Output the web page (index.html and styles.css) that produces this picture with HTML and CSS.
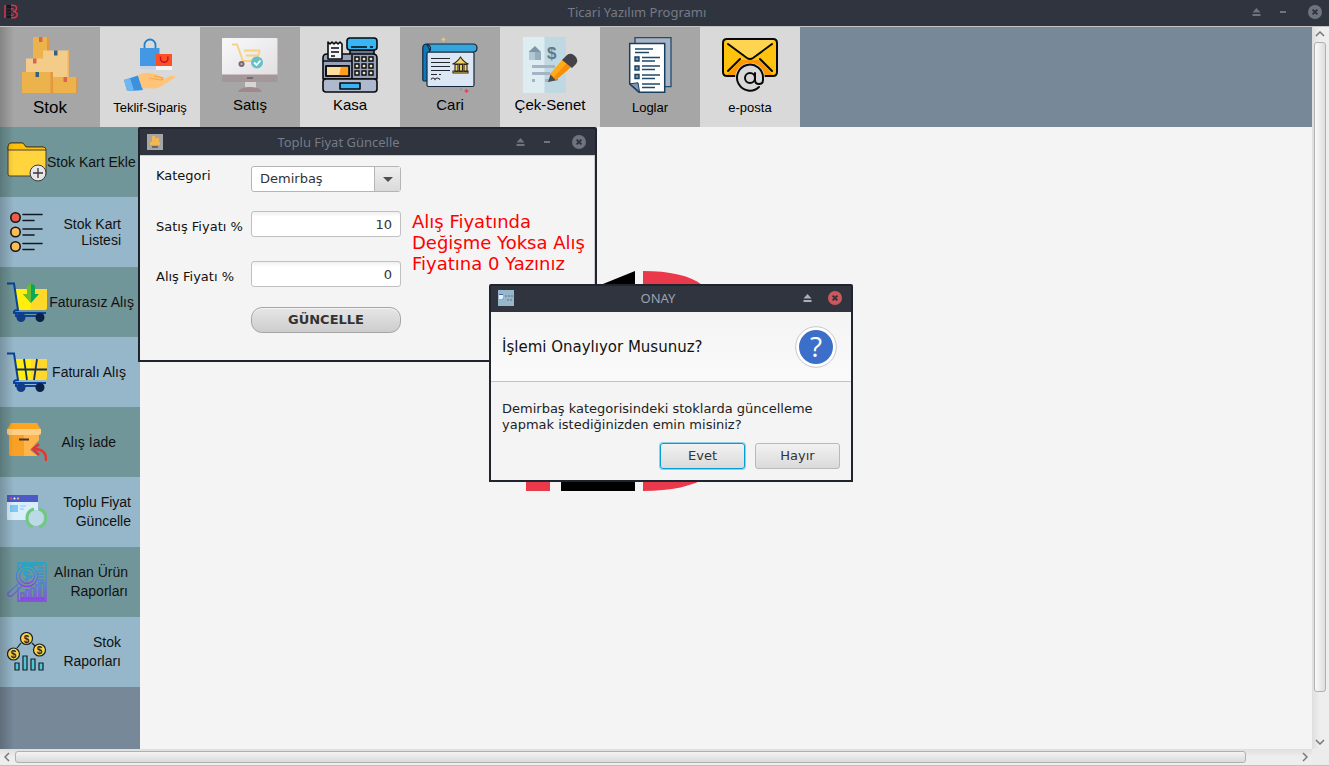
FILE: index.html
```html
<!DOCTYPE html>
<html lang="tr">
<head>
<meta charset="utf-8">
<title>Ticari Yazılım Programı</title>
<link rel="stylesheet" href="styles.css">
</head>
<body>
<svg class="defs" aria-hidden="true">
  <defs>
    <linearGradient id="screen" x1="0" y1="0" x2="1" y2="1"><stop offset="0" stop-color="#f8f8fa"/><stop offset="1" stop-color="#e2dfe1"/></linearGradient>
    <linearGradient id="violet" x1="0" y1="0" x2="0" y2="1"><stop offset="0" stop-color="#19a8cc"/><stop offset=".5" stop-color="#4f7fd6"/><stop offset="1" stop-color="#8a3fe8"/></linearGradient>
    <symbol id="close" viewBox="0 0 14 14"><circle cx="7" cy="7" r="7" fill="currentColor"/><path d="M4.600 4.600l4.800 4.800M9.400 4.600L4.600 9.400" stroke="#2f343f" stroke-width="2"/></symbol>
    <symbol id="eject" viewBox="0 0 8 8"><path d="M4 0l4 4.500H0zM0 6h8v2H0z" fill="currentColor"/></symbol>
  </defs>
</svg>

<div class="app">
  <header class="titlebar">
    <svg class="app-logo" viewBox="0 0 16 16"><path d="M1 1v13M7 1.500c7-1.500 7 5 2 6C15 8 15 15 7 13.500" fill="none" stroke="#d9364a" stroke-width="1.500"/><path d="M2.500 1H7v13H2.500z" fill="#14161c"/><path d="M3 5h4M3 8h4M3 11h4" stroke="#4b3440"/><path d="M7 4.500c3.500-.5 3.500 1.500 0 1.500M7 10c3.500-.5 3.500 2 0 1.500" fill="none" stroke="#d9364a"/></svg>
    <h1 class="title">Ticari Yazılım Programı</h1>
    <div class="controls">
      <button class="ctl" aria-label="Yukarı"><svg class="eject"><use href="#eject"/></svg></button>
      <button class="ctl" aria-label="Küçült"><span class="dash"></span></button>
      <button class="ctl" aria-label="Kapat"><svg class="close"><use href="#close"/></svg></button>
    </div>
  </header>

  <div class="viewport">
    <div class="content">
      <nav class="toolbar">
        <button class="tool dark">
          <svg class="tool-icon" viewBox="0 0 56 56"><path d="M11 0h14v22H11z" fill="#ecb34c"/><path d="M25 0h2.500v14H25z" fill="#e2983f"/><path d="M17 0h3.500v5H17z" fill="#dc6350"/><path d="M4 21.500h17V35H4z" fill="#f2cc88"/><path d="M21 13.500h26V40H21z" fill="#f2cc88"/><path d="M45.500 13.500H47V40h-1.500z" fill="#edb560"/><path d="M32 13.500h3.500v5H32z" fill="#35607f"/><path d="M11 21.500h3.500v5H11z" fill="#dc6350"/><path d="M0 35h29v21H0zM31 40h23v16H31z" fill="#ecb34c"/><path d="M28.500 35h2.500v21h-2.500zM54 40h2v16h-2z" fill="#e2983f"/><path d="M13.500 35H17v5h-3.500z" fill="#35607f"/><path d="M41.500 40H45v5h-3.500z" fill="#dc6350"/></svg>
          <span class="tool-label label-large">Stok</span>
        </button>
        <button class="tool light">
          <svg class="tool-icon" viewBox="0 0 56 56"><path d="M22.500 16V8a5.500 5.500 0 0 1 11 0v8" fill="none" stroke="#2381c9" stroke-width="1.800"/><path d="M18 11h19.500v18H18z" fill="#4398e4"/><path d="M18 29h16v3H18z" fill="#c5d3e5"/><path d="M34 28h16v4q0 1-1 1H35q-1 0-1-1z" fill="#f5f5f8"/><path d="M34 17h16v12H34z" fill="#ff5023"/><path d="M38.500 19.500v2a3.700 3.700 0 0 0 7.400 0v-2" fill="none" stroke="#c3102c" stroke-width="1.500"/><path d="M2 43l14-4.500 5 14.500q-8 1-16 .5z" fill="#3c91df"/><path d="M2 43l6-2 4 12.500H5z" fill="#71b7ef"/><path d="M16 38.500q5-3.500 12-2.500 8 1 12 4 2 2 0 3l9-4q5-1 4 1.500L40 49q-5 3-10 2.500l-10-.5z" fill="#ffc477"/><path d="M28 41l10 2q3 0 3-2l-9-2" fill="none" stroke="#f2a64c" stroke-width="1.200"/></svg>
          <span class="tool-label label-small">Teklif-Sipariş</span>
        </button>
        <button class="tool dark">
          <svg class="tool-icon" viewBox="0 0 56 56"><path d="M23 44h11v8H23z" fill="#d7d4d6"/><path d="M16 55q2-5 12-5t12 5z" fill="#a0888c"/><rect y="1" width="55.500" height="44" rx="1.500" fill="#a3979a"/><path d="M1 1h53.500q1 0 1 1v35.500H0V2q0-1 1-1z" fill="url(#screen)"/><path d="M25 40h6v2h-6z" fill="#756a6e"/><path d="M10 7.500h5L21 24h16M22 13.500h16M24 18.500h12.500M38 13.500l-3 9" fill="none" stroke="#f7d17e" stroke-width="1.800"/><circle cx="19.500" cy="27" r="3" fill="#7c6a70"/><circle cx="19.500" cy="27" r="1" fill="#cabfc4"/><circle cx="35" cy="25.500" r="6" fill="#68bfc7"/><path d="M32 25.500l2.500 2.500 4-4.500" fill="none" stroke="#fff" stroke-width="1.800"/></svg>
          <span class="tool-label label-medium">Satış</span>
        </button>
        <button class="tool light">
          <svg class="tool-icon" viewBox="0 0 56 56"><g stroke="#08090d" stroke-width="1.600" stroke-linejoin="round"><path d="M28 13h24v5H28z" fill="#68758c"/><path d="M1 42V21q0-4 4-4h46q4 0 4 4v21z" fill="#96a2b8"/><rect x="1" y="42" width="54" height="13" rx="3" fill="#aeb9ce"/><rect x="25" y="1" width="30" height="12" rx="3" fill="#38b5f3"/><path d="M6 22V5l2 2 2-2 2 2 2-2 2 2 2-2 2 2v15z" fill="#f3f4f8"/><path d="M4 29h23v10H4z" fill="#fddda0"/><path d="M19 29h8v10H17z" fill="#ff9f22" stroke="none"/><path d="M4 29h23v10H4z" fill="none"/><path d="M18 46h20v6H18z" fill="#36b5f2"/><path d="M1 24h29M30 18v24M9 11h8M9 15h8M9 19h4M29 10h16M48 10h3" fill="none"/></g><g fill="#f4e4bd" stroke="#08090d" stroke-width="1.400"><path d="M33 20h4v4h-4zM40 20h4v4h-4zM47 20h4v4h-4zM33 27h4v4h-4zM40 27h4v4h-4zM47 27h4v4h-4zM33 34h4v4h-4zM40 34h4v4h-4zM47 34h4v4h-4z"/></g></svg>
          <span class="tool-label label-medium">Kasa</span>
        </button>
        <button class="tool dark">
          <svg class="tool-icon" viewBox="0 0 56 56"><g stroke="#17273b" stroke-width="1.200"><path d="M.8 11q0-4 4-4l4 8v27q0 2-2 2H2q-1.200 0-1.200-2z" fill="#0c7abd"/><rect x="5" y="15" width="47" height="34.500" rx="1.500" fill="#dbe7f4"/><path d="M5 7h46q4 0 4 4t-4 4H7q4-5-2-8z" fill="#36a5da"/></g><path d="M9 21.500h19M9 25.500h19M9 29.500h19M9 33.500h19M9 37.500h6M17 37.500h2M9 42.500q2-3 4 0q2-3 5 0" fill="none" stroke="#24262e" stroke-width="1.200"/><path d="M30.500 27q5-2 8-7 3 5 8 7zM31 36h15v-2H31zM33 27.500h3v7h-3zM37.500 27.500h3v7h-3zM42 27.500h3v7h-3z" fill="#f3d466" stroke="#33271b" stroke-width="1.100"/><path d="M21.500.5v4M19.500 2.500h4" stroke="#f4ca55" stroke-width="1.300"/><path d="M44.500 52v4M42.500 54h4" stroke="#e4425e" stroke-width="1.300"/><path d="M28 .5v2" stroke="#8fbf70"/><path d="M39 51.500v2" stroke="#628da5"/></svg>
          <span class="tool-label label-medium">Cari</span>
        </button>
        <button class="tool light">
          <svg class="tool-icon" viewBox="0 0 56 56"><path d="M1 0h22v56H1z" fill="#deedf2"/><path d="M22.500 0H44v56H22.500z" fill="#bfd8e2"/><path d="M6.500 15L13 9l6 6z" fill="#8194a3"/><path d="M7 15h6v8H7z" fill="#b2c9d5"/><path d="M13 15h6v8h-6z" fill="#95aebe"/><text x="25" y="22" class="icon-dollar">$</text><path d="M10 28h23v3H10zM10 35h18v3H10zM10 42h3v3h-3zM23 42h5v3h-5z" fill="#a4b3c5"/><path d="M26 45l3-9 7 7z" fill="#4b4b50"/><path d="M28 37l13-15 8 8-15 13z" fill="#ffab18"/><path d="M31.500 40.500L45 26l4 4-15 13z" fill="#f78d0b"/><path d="M40 23l5-5q4-3 8 1t1 8l-4 4z" fill="#424248"/></svg>
          <span class="tool-label label-medium">Çek-Senet</span>
        </button>
        <button class="tool dark">
          <svg class="tool-icon" viewBox="0 0 56 56"><path d="M13 .7h36v49H13z" fill="#a8b4c4" stroke="#254b6a" stroke-width="1.300"/><path d="M7.700 6.500h35v48.800H17l-9.300-8.500z" fill="#fff" stroke="#173f5e" stroke-width="1.500"/><path d="M8 46.800l8-1 1.500 9z" fill="#8497ae" stroke="#173f5e"/><path d="M13 12h18M13 15.500h14M20 20.500h18M20 24h13M20 29h18M20 32.500h13M20 38h18M20 41.500h13M20 47h18M20 50.500h13" stroke="#1d496a" stroke-width="1.300"/><path d="M13 20h4v4h-4zM13 29h4v4h-4zM13 37.500h4v4h-4z" fill="#7d98b3" stroke="#173f5e" stroke-width="1.400"/></svg>
          <span class="tool-label label-small">Loglar</span>
        </button>
        <button class="tool light">
          <svg class="tool-icon" viewBox="0 0 56 56"><rect x="1" y="2" width="54" height="37" rx="4" fill="#ffc20d"/><path d="M5 38l14-15h18l14 15v1H5z" fill="#ff9800"/><path d="M3 3h50L31 21q-3 2-6 0z" fill="#ffd451"/><g fill="none" stroke="#090909" stroke-width="2" stroke-linecap="round"><path d="M15 39H5q-4 0-4-4V6q0-4 4-4h46q4 0 4 4v29q0 4-4 4H41M6 7l19 14q3 2 6 0L50 7M6 34l12-12M50 34L38 22"/></g><circle cx="28" cy="41" r="15" fill="#d9d9d9"/><path d="M37 50a13 13 0 1 1 4-9v2q0 4-4 4t-4-4v-7" fill="none" stroke="#090909" stroke-width="2" stroke-linecap="round"/><circle cx="28" cy="41" r="5" fill="none" stroke="#090909" stroke-width="2"/></svg>
          <span class="tool-label label-small">e-posta</span>
        </button>
      </nav>

      <div class="body">
        <nav class="sidebar">
          <button class="side teal">
            <svg class="side-icon" viewBox="0 0 40 40"><path d="M1 5q0-4 3-4h12l3 4h17q3 0 3 3v24q0 2-2 2H3q-2 0-2-2z" fill="#ffd43d" stroke="#4c4328"/><path d="M1 8V5q0-4 3-4h12l3 4h17q3 0 3 3z" fill="#fcc10d" stroke="#4c4328"/><circle cx="31" cy="31" r="8" fill="#e7e7e9" stroke="#373737"/><path d="M31 26v10M26 31h10" stroke="#373737" stroke-width="1.300"/></svg>
            <span class="side-label end-7">Stok Kart Ekle</span>
          </button>
          <button class="side blue">
            <svg class="side-icon" viewBox="0 0 40 40"><g stroke="#111820" stroke-width="1.600" stroke-linecap="round"><circle cx="8.500" cy="5.500" r="4.700" fill="#f05c43"/><circle cx="8.500" cy="20" r="4.700" fill="#fdbd52"/><circle cx="8.500" cy="34.500" r="4.700" fill="#fdbd52"/><path d="M16 2.500h19M16 8.500h11M16 17h19M16 23h11M16 31.500h19M16 37.500h11"/></g></svg>
            <span class="side-label end-19 tight">Stok Kart<br>Listesi</span>
          </button>
          <button class="side teal">
            <svg class="side-icon" viewBox="0 0 40 40"><path d="M7 7h33v18q0 3-3 3H11z" fill="#ffee0e"/><path d="M24 7h16v18q0 3-3 3H24z" fill="#ffd82a"/><path d="M0 1.500h7L11 28q-5 0-4 3h32M9 31v3h26v-3" fill="none" stroke="#07439b" stroke-width="2"/><circle cx="14" cy="35.500" r="4.500" fill="#123d86"/><circle cx="33" cy="35.500" r="4.500" fill="#0b2149"/><path d="M24 2q4 0 4 3v7h4l-8 9-8-9h4V5q0-3 4-3z" fill="#0aa956"/><path d="M24 2v19l-8-9h4V5q0-3 4-3z" fill="#6abd31"/></svg>
            <span class="side-label end-7">Faturasız Alış</span>
          </button>
          <button class="side blue">
            <svg class="side-icon" viewBox="0 0 40 40"><path d="M7 7h33v18q0 3-3 3H11z" fill="#ffee0e"/><path d="M24 7h16v18q0 3-3 3H24z" fill="#ffd82a"/><path d="M0 1.500h7L11 28q-5 0-4 3h32M9 31v3h26v-3" fill="none" stroke="#07439b" stroke-width="2"/><path d="M9 17.500h31M17 7l3 21M30 7l-3 21" fill="none" stroke="#17305b" stroke-width="1.800"/><circle cx="14" cy="35.500" r="4.500" fill="#123d86"/><circle cx="33" cy="35.500" r="4.500" fill="#0b2149"/></svg>
            <span class="side-label end-14">Faturalı Alış</span>
          </button>
          <button class="side teal">
            <svg class="side-icon" viewBox="0 0 40 40"><path d="M2 12h30v20q0 2-2 2H4q-2 0-2-2z" fill="#f9a126"/><path d="M17 12h15v22H17z" fill="#ffb44c"/><path d="M4 1h26l4 7H0z" fill="#ffa51f"/><path d="M0 7h34v4q0 2-2 2H2q-2 0-2-2z" fill="#ffcf88"/><path d="M12 17.500h10" stroke="#453528" stroke-width="2"/><path d="M32 18l-9 10 9 7z" fill="#719699"/><path d="M39 39q1-12-12-12M32 22l-6 5 6 6" fill="none" stroke="#e4382f" stroke-width="2.500"/></svg>
            <span class="side-label end-24">Alış İade</span>
          </button>
          <button class="side blue">
            <svg class="side-icon" viewBox="0 0 40 40"><path d="M0 3h31v24q0 1-1 1H1q-1 0-1-1z" fill="#d9eefb"/><path d="M0 3h31v7H0z" fill="#4c5ac6"/><circle cx="4" cy="6.500" r="1" fill="#f1635f"/><circle cx="7.500" cy="6.500" r="1" fill="#fff"/><circle cx="11" cy="6.500" r="1" fill="#ffcc5a"/><path d="M3 13h8v7H3z" fill="#80c9f4"/><path d="M13 14h6M13 17h4" stroke="#80c9f4"/><circle cx="29" cy="26" r="8" fill="#bcd9e6"/><path d="M27 17q-7 2-7 9t6 9M32 17q7 2 7 9t-7 9" fill="none" stroke="#72c881" stroke-width="3"/></svg>
            <span class="side-label end-9">Toplu Fiyat<br>Güncelle</span>
          </button>
          <button class="side teal">
            <svg class="side-icon" viewBox="0 0 40 40"><g fill="none" stroke="url(#violet)" stroke-width="1.300"><path d="M11 7V1h28v38H11V25M14 3h22M31 6h6M31 9h6M31 12h6M31 15h6M31 18h6M31 21h6"/><circle cx="20" cy="14" r="10.500"/><circle cx="20" cy="14" r="7.500"/><path d="M23 11q-6-3-6 0t6 3-6 4M20 8v12M12 21L1 31q-1 4 4 3l10-10M14 36v-5h3v5zM19 36v-8h3v8zM24 36V26h3v10zM29 36V23h3v13zM34 36V20h3v16zM13 37h25"/></g></svg>
            <span class="side-label end-12">Alınan Ürün<br>Raporları</span>
          </button>
          <button class="side blue">
            <svg class="side-icon" viewBox="0 0 40 40"><g stroke="#152126" stroke-width="1.200"><path d="M14 11l-4 5M25 11l4 4"/><circle cx="19.500" cy="6.500" r="6" fill="#ffd24c"/><circle cx="6.500" cy="22" r="6" fill="#ffd24c"/><circle cx="32.500" cy="18" r="6" fill="#ffd24c"/><path d="M8 31h4v7H8zM16 24h4v14h-4zM24 27h4v11h-4zM32 31h4v7h-4z" fill="#50c6da"/></g><text x="16.700" y="10.500" class="icon-coin">$</text><text x="3.700" y="26" class="icon-coin">$</text><text x="29.700" y="22" class="icon-coin">$</text></svg>
            <span class="side-label end-19">Stok<br>Raporları</span>
          </button>
        </nav>

        <main class="desktop">
          <svg class="brand" viewBox="0 0 204 220"><path d="M0 0h24v220H0zM117 0c54 0 78 18 78 57 0 25-13 42-36 50 30 7 45 26 45 54 0 40-30 59-87 59z" fill="#ea394b"/><path d="M109 0v220H35V30z" fill="#000"/></svg>

          <section class="window price-window">
            <header class="window-bar">
              <svg class="window-icon" viewBox="0 0 16 16"><path d="M0 0h16v16H0z" fill="#a6a6a6"/><path d="M5 2h3v2h4v4h1v3H3V8h2z" fill="#efb755"/><path d="M5 13h6" stroke="#555" stroke-width="1.500"/></svg>
              <h2 class="title">Toplu Fiyat Güncelle</h2>
              <div class="controls">
                <button class="ctl" aria-label="Yukarı"><svg class="eject"><use href="#eject"/></svg></button>
                <button class="ctl" aria-label="Küçült"><span class="dash"></span></button>
                <button class="ctl" aria-label="Kapat"><svg class="close"><use href="#close"/></svg></button>
              </div>
            </header>
            <form class="price-form">
              <label for="kategori" class="row-category">Kategori</label>
              <div class="combo row-category">
                <select id="kategori"><option>Demirbaş</option></select>
                <span class="combo-arrow"></span>
              </div>
              <label for="satis" class="low row-sale">Satış Fiyatı %</label>
              <input id="satis" class="field row-sale" type="text" value="10">
              <label for="alis" class="low row-purchase">Alış Fiyatı %</label>
              <input id="alis" class="field row-purchase" type="text" value="0">
              <button class="update" type="button">GÜNCELLE</button>
              <p class="note">Alış Fiyatında Değişme Yoksa Alış Fiyatına 0 Yazınız</p>
            </form>
          </section>

          <section class="window confirm-window" role="dialog" aria-labelledby="onay">
            <header class="window-bar">
              <svg class="window-icon" viewBox="0 0 16 16"><path d="M0 0h16v16H0z" fill="#96b7c9"/><path d="M1 4h4v5H1z" fill="#e5f2fa"/><path d="M1 4h4v1H1z" fill="#4c5ac6"/><path d="M4 9h2" stroke="#62b981"/><path d="M7 6h8M9 10h6" stroke="#597482" stroke-dasharray="2 1"/></svg>
              <h2 class="title active" id="onay">ONAY</h2>
              <div class="controls controls-active">
                <button class="ctl" aria-label="Yukarı"><svg class="eject"><use href="#eject"/></svg></button>
                <button class="ctl danger" aria-label="Kapat"><svg class="close"><use href="#close"/></svg></button>
              </div>
            </header>
            <div class="question">
              <p>İşlemi Onaylıyor Musunuz?</p>
              <svg class="question-icon" viewBox="0 0 42 42"><circle cx="21" cy="21" r="20.300" fill="#fff" stroke="#c8c8c8"/><circle cx="21" cy="21" r="17" fill="#3c6fca"/><text x="21" y="31" text-anchor="middle" class="icon-question">?</text></svg>
            </div>
            <div class="answer">
              <p>Demirbaş kategorisindeki stoklarda güncelleme yapmak istediğinizden emin misiniz?</p>
              <div class="answer-buttons">
                <button class="choice default">Evet</button>
                <button class="choice">Hayır</button>
              </div>
            </div>
          </section>
        </main>
      </div>
    </div>

    <div class="vbar">
      <svg class="chev" viewBox="0 0 10 6"><path d="M1 5l4-4 4 4"/></svg>
      <div class="vtrack"><div class="vthumb"></div></div>
      <svg class="chev" viewBox="0 0 10 6"><path d="M1 1l4 4 4-4"/></svg>
    </div>
    <div class="hbar">
      <svg class="chev-side" viewBox="0 0 6 10"><path d="M5 1L1 5l4 4"/></svg>
      <div class="htrack"><div class="hthumb"></div></div>
      <svg class="chev-side" viewBox="0 0 6 10"><path d="M1 1l4 4-4 4"/></svg>
    </div>
    <div class="corner"></div>
  </div>
</div>
</body>
</html>
```
FILE: styles.css
```css
* { box-sizing: border-box; }
body { margin: 0; background: #f4f4f4; font-family: "DejaVu Sans", sans-serif; font-size: 13px; color: #111; }
button { font: inherit; color: inherit; border: 0; padding: 0; background: none; }
p, h1, h2 { margin: 0; font-weight: normal; }
svg { display: block; flex: none; }
.defs { position: absolute; width: 0; height: 0; }

.app { height: 100vh; display: flex; flex-direction: column; overflow: hidden; }

/* Title bars */
.titlebar, .window-bar { display: grid; align-items: center; background: #2f343f; color: #6d7380; }
.titlebar { grid-template-columns: 24px 1fr 76px; height: 27px; padding: 0 7px 2px 4px; border-bottom: 1px solid #c4c4c4; }
.app-logo { width: 16px; height: 16px; }
.title { text-align: center; font: 13px/20px "Noto Sans", sans-serif; color: #757b87; }
.title.active { color: #9ca2af; }
.controls { display: flex; justify-content: flex-end; align-items: center; gap: 19px; }
.controls-active { gap: 16px; color: #aab0bd; }
.ctl { display: flex; align-items: center; justify-content: center; height: 14px; }
.danger { color: #cc575d; }
.eject { width: 9px; height: 8px; }
.close { width: 14px; height: 14px; }
.dash { width: 6px; height: 2px; background: currentColor; margin-right: 3px; }

/* Scrollable area */
.viewport { flex: 1; min-height: 0; display: grid; grid-template-columns: minmax(0, 1fr) 17px; grid-template-rows: minmax(0, 1fr) 17px; }
.content { position: relative; display: flex; flex-direction: column; min-height: 0; }
.content::after { content: ""; position: absolute; left: 0; top: 0; bottom: 0; width: 14px; background: linear-gradient(to right, rgba(0,0,0,.2), transparent); pointer-events: none; }
.toolbar { display: flex; background: #778899; font-family: "Liberation Sans", sans-serif; }
.tool { width: 100px; height: 100px; padding-top: 10px; display: flex; flex-direction: column; align-items: center; gap: 4px; color: #000; }
.dark { background: #a6a6a6; }
.light { background: #d9d9d9; }
.tool-icon { width: 56px; height: 56px; }
.label-large { font-size: 17px; line-height: 21px; }
.label-medium { font-size: 15px; line-height: 16px; }
.label-small { font-size: 13px; line-height: 21px; }
.icon-dollar { font: bold 17px "Liberation Sans", sans-serif; fill: #667987; }
.icon-coin { font: bold 10px "Liberation Sans", sans-serif; fill: #30291a; }

.body { flex: 1; min-height: 0; display: flex; }
.sidebar { width: 140px; flex: none; background: #778899; }
.side { width: 100%; height: 70px; padding-left: 7px; display: flex; align-items: center; justify-content: space-between; font-family: "Liberation Sans", sans-serif; font-size: 14px; line-height: 19px; text-align: right; white-space: nowrap; color: #111; }
.teal { background: #719699; }
.blue { background: #96b7c9; }
.side-icon { width: 40px; height: 40px; }
.tight { line-height: 16px; }
.end-7 { padding-right: 6px; }
.end-9 { padding-right: 9px; }
.end-12 { padding-right: 12px; }
.end-14 { padding-right: 14px; }
.end-19 { padding-right: 19px; }
.end-24 { padding-right: 24px; }

/* Desktop and its windows */
.desktop { flex: 1; position: relative; background: #f4f4f4; }
.brand { position: absolute; left: 386px; top: 144px; width: 204px; height: 220px; }
.window { position: absolute; border: 2px solid #1f242e; border-radius: 2px 2px 0 0; background: #f4f4f4; }
.window-bar { grid-template-columns: 16px 1fr 72px; height: 26px; padding: 0 9px 1px 7px; }
.window-icon { width: 16px; height: 16px; }
.price-window { left: -2px; top: 0; width: 459px; }
.confirm-window { left: 349px; top: 157px; width: 364px; }
.confirm-window .window-bar { grid-template-columns: 44px 1fr 68px; padding-bottom: 2px; }

.price-form { display: grid; grid-template-columns: 95px 150px 1fr; grid-template-rows: 45px 50px 46px 26px; align-items: start; padding: 10px 5px 27px 16px; border: 1px solid #ccc; border-width: 1px 1px 0 0; line-height: 20px; }
.row-category { grid-row: 1; }
.row-sale { grid-row: 2; }
.row-purchase { grid-row: 3; }
label { grid-column: 1; }
.low { padding-top: 6px; }
.combo { grid-column: 2; position: relative; }
.combo select { display: block; appearance: none; width: 100%; height: 26px; padding: 0 8px; border: 1px solid #b5b5b5; border-radius: 3px; background: #fff; font: inherit; color: #333; }
.combo-arrow { position: absolute; top: 1px; right: 1px; bottom: 1px; width: 26px; border-left: 1px solid #b5b5b5; background: linear-gradient(#efefef, #dadada); display: flex; align-items: center; justify-content: center; pointer-events: none; }
.combo-arrow::before { content: ""; border: 5px solid transparent; border-top-color: #505050; border-bottom: 0; }
.field { grid-column: 2; width: 100%; height: 26px; padding: 0 8px; border: 1px solid #c0c0c0; border-radius: 3px; background: linear-gradient(#f0f0f0, #fff 5px); font: inherit; color: #333; text-align: right; }
.update { grid-column: 2; grid-row: 4; height: 26px; border: 1px solid #a5a5a5; border-radius: 11px; background: linear-gradient(#e6e6e6, #cdcdcd); box-shadow: inset 0 1px #f4f4f4; font-weight: bold; color: #333; }
.note { grid-column: 3; grid-row: 2 / 4; padding-left: 11px; margin-right: -5px; font-size: 18px; line-height: 21px; color: #f00; }

.question { display: flex; align-items: center; justify-content: space-between; height: 70px; padding: 0 14px 0 11px; border-bottom: 1px solid #c3c3c3; background: linear-gradient(#f4f4f4, #fafafa); font-size: 15px; }
.question-icon { width: 42px; height: 42px; }
.icon-question { font: 28px "Open Sans", sans-serif; fill: #fff; }
.answer { padding: 19px 11px 11px; line-height: 16px; color: #222; }
.answer-buttons { display: flex; justify-content: flex-end; gap: 10px; margin-top: 10px; }
.choice { width: 85px; height: 26px; border: 1px solid #b9b9b9; border-radius: 3px; background: linear-gradient(#f2f2f2, #dadada); color: #333; }
.choice.default { border-color: #039ed3; box-shadow: 0 0 0 1px #8fd0e8; }

/* Scroll bars */
.vbar, .hbar { display: flex; align-items: center; background: linear-gradient(to right, #dedede, #eee 8px); }
.vbar { flex-direction: column; padding: 4px 3px 4px 1px; }
.hbar { padding: 0 4px; background: linear-gradient(#dedede, #eee 8px); border-bottom: 1px solid #c0c0c0; }
.chev { width: 10px; height: 6px; }
.chev-side { width: 6px; height: 10px; }
.chev path, .chev-side path { fill: none; stroke: #777; stroke-width: 1.5; }
.vtrack { flex: 1; width: 100%; padding: 5px 0 5px 1px; }
.vthumb { height: 94%; border: 1px solid #b0b0b0; border-radius: 3px; background: linear-gradient(to right, #fafafa, #dedede); }
.htrack { flex: 1; padding: 0 5px; }
.hthumb { width: 96%; height: 12px; border: 1px solid #b0b0b0; border-radius: 3px; background: linear-gradient(#f4f4f4, #dadada); }
.corner { background: #ececec; border-bottom: 1px solid #c0c0c0; }
```
